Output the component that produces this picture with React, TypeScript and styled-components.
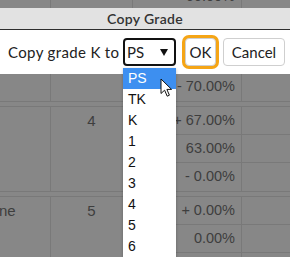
import React from 'react';
import styled, {createGlobalStyle} from 'styled-components';

const GlobalStyle = createGlobalStyle`
  html, body {
    margin: 0;
    padding: 0;
    background: #878787;
  }
  body {
    font-family: "Liberation Sans", Arial, sans-serif;
  }
`;

const UI_FONT = `"Lato", "Liberation Sans", sans-serif`;
const LINE = '#797979';

const groups = [
  {label: '', num: '', rows: ['- 66.00%', '', '', '- 70.00%']},
  {label: '', num: '4', rows: ['+ 67.00%', '63.00%', '- 0.00%']},
  {label: 'ne', num: '5', rows: ['+ 0.00%', '0.00%', '']}
];

const options = ['PS', 'TK', 'K', '1', '2', '3', '4', '5', '6'];

export default function App() {
  return (
    <Page>
      <GlobalStyle />
      <Table>
        {groups.map((g, i) => (
          <Group key={i}>
            <NameCell>{g.label}</NameCell>
            <NumCell>{g.num}</NumCell>
            <SubRows>
              {g.rows.map((r, j) => (
                <SubRow key={j}>
                  <PctCell clipped={i === 0 && j === 0}>{r}</PctCell>
                  <EmptyCell />
                </SubRow>
              ))}
            </SubRows>
          </Group>
        ))}
      </Table>

      <Dialog>
        <DialogHeader>Copy Grade</DialogHeader>
        <DialogBody>
          <Label>Copy grade K to</Label>
          <Select>
            <span>PS</span>
            <Caret />
            <OptionList>
              {options.map((o, i) => (
                <Option key={o} active={i === 0}>
                  {o}
                </Option>
              ))}
            </OptionList>
          </Select>
          <Button w={31} gap={9} focused>
            OK
          </Button>
          <Button w={62} gap={7}>
            Cancel
          </Button>
        </DialogBody>
      </Dialog>

      <Cursor width="13" height="20" viewBox="0 0 13 20">
        <path
          d="M1 1 L1 15.5 L4.6 12.2 L7.2 18.2 L9.4 17.2 L6.9 11.4 L11.6 11.4 Z"
          fill="#fff"
          stroke="#111"
          strokeWidth="1"
          strokeLinejoin="round"
        />
      </Cursor>
    </Page>
  );
}

const Page = styled.div`
  position: relative;
  width: 290px;
  height: 257px;
  overflow: hidden;
  background: #878787;
`;

const Table = styled.div`
  margin-top: -12px;
  display: flex;
  flex-direction: column;
  gap: 4px;
  color: #3e3e3e;
  font-size: 15px;
`;

const Group = styled.div`
  display: flex;
  border-top: 1px solid ${LINE};
  border-bottom: 1px solid ${LINE};
`;

const NameCell = styled.div`
  width: 52px;
  flex: none;
  box-sizing: border-box;
  border-right: 1px solid ${LINE};
  line-height: 28px;
  margin-left: -1px;
`;

const NumCell = styled.div`
  width: 82px;
  flex: none;
  box-sizing: border-box;
  border-right: 1px solid ${LINE};
  text-align: center;
  line-height: 28px;
`;

const SubRows = styled.div`
  flex: 1;
  display: flex;
  flex-direction: column;
`;

const SubRow = styled.div`
  display: flex;
  height: 28px;
  box-sizing: border-box;
  border-bottom: 1px solid ${LINE};
  &:last-child {
    border-bottom: none;
  }
`;

const PctCell = styled.div<{clipped?: boolean}>`
  width: 109px;
  box-sizing: border-box;
  border-right: 1px solid ${LINE};
  text-align: right;
  padding-right: 6px;
  font-size: 14.5px;
  line-height: ${({clipped}) => (clipped ? '14px' : '27px')};
  overflow: hidden;
  white-space: nowrap;
`;

const EmptyCell = styled.div`
  flex: 1;
`;

const Dialog = styled.div`
  position: absolute;
  top: 8px;
  left: 0;
  right: 0;
  font-family: ${UI_FONT};
  color: #222;
`;

const DialogHeader = styled.div`
  height: 21px;
  background: #e2e2e2;
  border-bottom: 1px solid #2e2e2e;
  text-align: center;
  font-size: 14px;
  font-weight: 600;
  letter-spacing: 0.3px;
  line-height: 21px;
  color: #333;
`;

const DialogBody = styled.div`
  height: 44px;
  background: #fff;
  display: flex;
  align-items: center;
  padding-left: 8px;
`;

const Label = styled.span`
  font-size: 15px;
  letter-spacing: 0.35px;
  width: 115px;
  white-space: nowrap;
`;

const Select = styled.div`
  position: relative;
  width: 53px;
  height: 28px;
  box-sizing: border-box;
  border: 2px solid #111;
  border-radius: 4px;
  display: flex;
  align-items: center;
  padding-left: 2px;
  font-size: 15px;
  span {
    flex: 1;
  }
`;

const Caret = styled.i`
  width: 0;
  height: 0;
  border-left: 4.5px solid transparent;
  border-right: 4.5px solid transparent;
  border-top: 7px solid #111;
  margin-right: 6px;
`;

const OptionList = styled.div`
  position: absolute;
  top: 28px;
  left: -2px;
  width: 53px;
  background: #fff;
  font-family: "Liberation Sans", Arial, sans-serif;
  font-size: 14px;
  color: #111;
  box-shadow: 0 1px 3px rgba(0, 0, 0, 0.25);
`;

const Option = styled.div<{active?: boolean}>`
  height: 21px;
  line-height: 21px;
  padding-left: 5px;
  background: ${({active}) => (active ? '#3d8ff0' : '#fff')};
  color: ${({active}) => (active ? '#fff' : '#111')};
`;

const Button = styled.button<{w: number; gap: number; focused?: boolean}>`
  width: ${({w}) => w}px;
  height: 28px;
  box-sizing: border-box;
  margin-left: ${({gap}) => gap}px;
  padding: 0;
  text-align: center;
  background: #fff;
  border: 1px solid #cfcfcf;
  border-radius: 4px;
  font-family: ${UI_FONT};
  font-size: 15px;
  color: #222;
  box-shadow: ${({focused}) => (focused ? '0 0 0 3px #f5a516' : 'none')};
`;

const Cursor = styled.svg`
  position: absolute;
  left: 160px;
  top: 78px;
`;
